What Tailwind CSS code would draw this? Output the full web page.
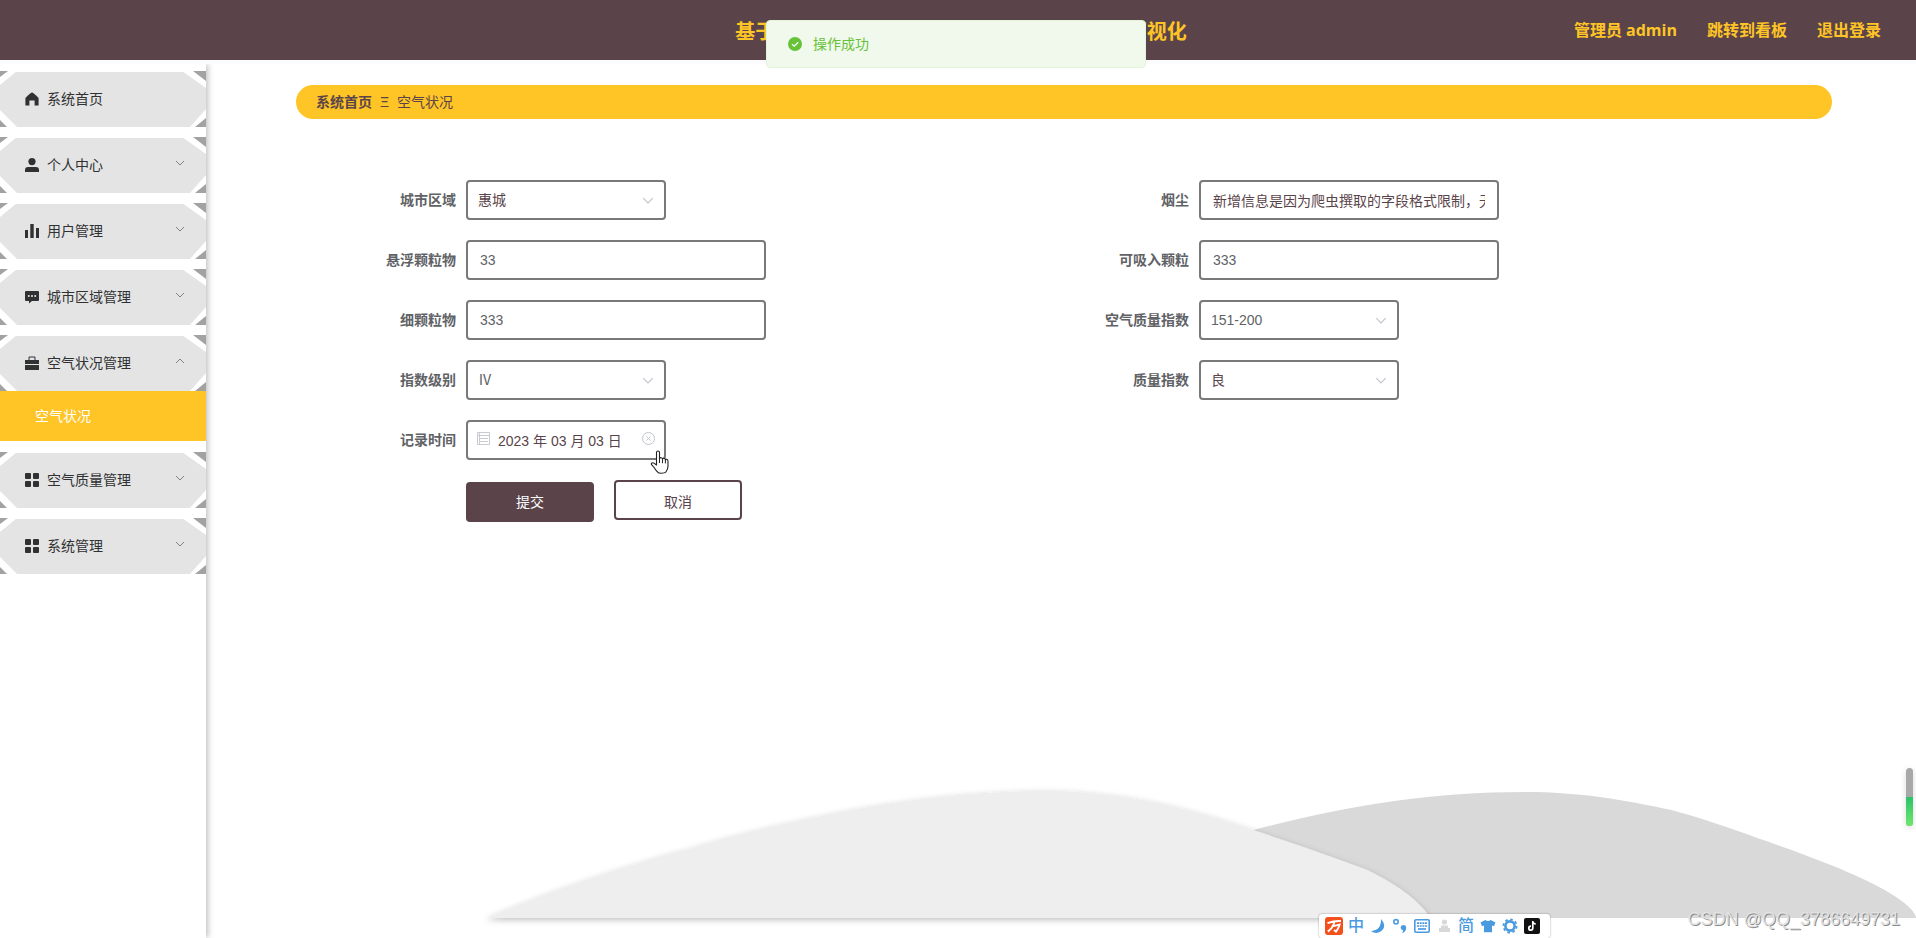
<!DOCTYPE html>
<html lang="zh-CN">
<head>
<meta charset="utf-8">
<meta name="viewport" content="width=device-width, initial-scale=1">
<title>空气状况</title>
<script src="https://cdn.jsdelivr.net/npm/@tailwindcss/browser@4"></script>
</head>
<body class="flex min-h-screen flex-col overflow-hidden bg-white font-['Liberation_Sans','Noto_Sans_CJK_SC',sans-serif] text-sm text-[#606266]">

<!-- Shared symbols -->
<svg class="hidden" aria-hidden="true">
  <symbol id="plate" viewBox="0 0 206 56" preserveAspectRatio="none">
    <path d="M0 1H206V56H0Z" fill="#e4e4e4"/>
    <g fill="#fff">
      <path d="M0 0H17L0 14Z"/><path d="M182 0H206V17Z"/><path d="M206 38V56H190Z"/><path d="M0 39V56H17Z"/>
    </g>
    <g fill="#a2a2a2">
      <path d="M0 0H8L0 6Z"/><path d="M193 0H206V10Z"/><path d="M206 47V56H195Z"/><path d="M0 49V56H7Z"/>
    </g>
  </symbol>
  <symbol id="down" viewBox="0 0 10 6"><path d="M1 1L5 5L9 1" fill="none" stroke="currentColor"/></symbol>
  <symbol id="up" viewBox="0 0 10 6"><path d="M1 5L5 1L9 5" fill="none" stroke="currentColor"/></symbol>
  <symbol id="grid" viewBox="0 0 14 14"><g fill="currentColor"><rect width="6" height="6" rx="1"/><rect x="8" width="6" height="6" rx="1"/><rect y="8" width="6" height="6" rx="1"/><rect x="8" y="8" width="6" height="6" rx="1"/></g></symbol>
</svg>

<header class="relative z-10 grid h-16 shrink-0 grid-cols-[1fr_auto_1fr] items-center border-b-4 border-[#fbfafd] bg-[#5a444a] pr-[35px] pl-[41px] font-['Open_Sans','Noto_Sans_CJK_SC',sans-serif] font-bold text-[#ffc425]">
  <h1 class="col-start-2 pt-[3px] text-xl whitespace-nowrap">基于Python的惠州市空气质量数据采集分析可视化</h1>
  <nav class="flex items-center justify-end gap-[30px] text-base whitespace-nowrap">
    <span>管理员 admin</span>
    <a href="#">跳转到看板</a>
    <a href="#">退出登录</a>
  </nav>
  <!-- Toast -->
  <div role="status" class="absolute top-5 left-1/2 z-10 flex h-12 w-[380px] -translate-x-[192px] items-center gap-[11px] rounded border border-[#e1f3d8] bg-[#f0f9eb] px-[21px] text-sm font-normal text-[#67c23a]">
    <svg class="size-[14px]" viewBox="0 0 14 14"><circle cx="7" cy="7" r="7" fill="#67c23a"/><path d="M4 7.2L6.2 9.2L10.2 5.2" fill="none" stroke="#fff" stroke-width="1.3"/></svg>
    <p>操作成功</p>
  </div>
</header>

<div class="flex flex-1">
  <aside class="relative w-[206px] shrink-0 pt-[7px] text-[#303133] shadow-[2px_0_6px_rgba(0,0,0,0.25)]">
    <nav class="flex flex-col gap-[10px]">
      <a href="#" class="relative flex h-14 items-center pr-[22px] pl-[25px]">
        <svg class="absolute inset-0 h-full w-full"><use href="#plate"/></svg>
        <svg class="relative mr-2 size-[14px]" viewBox="0 0 14 14"><path d="M7 0.5Q8 0.5 13.2 5.6Q13.6 6 13.6 6.6V13.4H9.6V8.6H4.4V13.4H0.4V6.6Q0.4 6 0.8 5.6Q6 0.5 7 0.5Z" fill="currentColor"/></svg>
        <span class="relative flex-1">系统首页</span>
      </a>
      <button type="button" class="relative flex h-14 items-center pr-[21px] pl-[25px] text-left">
        <svg class="absolute inset-0 h-full w-full"><use href="#plate"/></svg>
        <svg class="relative mr-2 size-[14px]" viewBox="0 0 14 14"><circle cx="7" cy="3.6" r="3.6" fill="currentColor"/><path d="M0 14V12Q0 9 3 9H11Q14 9 14 12V14Z" fill="currentColor"/></svg>
        <span class="relative flex-1">个人中心</span>
        <svg class="relative mb-1 h-[6px] w-[10px] text-[#808285]"><use href="#down"/></svg>
      </button>
      <button type="button" class="relative flex h-14 items-center pr-[21px] pl-[25px] text-left">
        <svg class="absolute inset-0 h-full w-full"><use href="#plate"/></svg>
        <svg class="relative mr-2 size-[14px]" viewBox="0 0 14 14"><path d="M0 6H3V14H0ZM5.3 0H8.7V14H5.3ZM11 4H14V14H11Z" fill="currentColor"/></svg>
        <span class="relative flex-1">用户管理</span>
        <svg class="relative mb-1 h-[6px] w-[10px] text-[#808285]"><use href="#down"/></svg>
      </button>
      <button type="button" class="relative flex h-14 items-center pr-[21px] pl-[25px] text-left">
        <svg class="absolute inset-0 h-full w-full"><use href="#plate"/></svg>
        <svg class="relative mr-2 size-[14px]" viewBox="0 0 14 14"><path d="M1 1H13Q14 1 14 2V10Q14 11 13 11H7L4 13.6V11H1Q0 11 0 10V2Q0 1 1 1Z" fill="currentColor"/><g fill="#e4e4e4"><circle cx="3.8" cy="6" r="1"/><circle cx="7" cy="6" r="1"/><circle cx="10.2" cy="6" r="1"/></g></svg>
        <span class="relative flex-1">城市区域管理</span>
        <svg class="relative mb-1 h-[6px] w-[10px] text-[#808285]"><use href="#down"/></svg>
      </button>
      <div class="pb-px">
        <button type="button" aria-expanded="true" class="relative flex h-14 w-full items-center pr-[21px] pl-[25px] text-left">
          <svg class="absolute inset-0 h-full w-full"><use href="#plate"/></svg>
          <svg class="relative mr-2 size-[14px]" viewBox="0 0 14 14"><path d="M4 4V1H10V4" fill="none" stroke="currentColor"/><path d="M0 4H14V8H0ZM0 9H14V14H0Z" fill="currentColor"/></svg>
          <span class="relative flex-1">空气状况管理</span>
          <svg class="relative mb-1 h-[6px] w-[10px] text-[#808285]"><use href="#up"/></svg>
        </button>
        <a href="#" class="flex h-[50px] items-center bg-[#ffc425] pl-[35px] text-white">空气状况</a>
      </div>
      <button type="button" class="relative flex h-14 items-center pr-[21px] pl-[25px] text-left">
        <svg class="absolute inset-0 h-full w-full"><use href="#plate"/></svg>
        <svg class="relative mr-2 size-[14px]"><use href="#grid"/></svg>
        <span class="relative flex-1">空气质量管理</span>
        <svg class="relative mb-1 h-[6px] w-[10px] text-[#808285]"><use href="#down"/></svg>
      </button>
      <button type="button" class="relative flex h-14 items-center pr-[21px] pl-[25px] text-left">
        <svg class="absolute inset-0 h-full w-full"><use href="#plate"/></svg>
        <svg class="relative mr-2 size-[14px]"><use href="#grid"/></svg>
        <span class="relative flex-1">系统管理</span>
        <svg class="relative mb-1 h-[6px] w-[10px] text-[#808285]"><use href="#down"/></svg>
      </button>
    </nav>
  </aside>

  <main class="relative flex-1 pt-[21px] pr-[84px] pl-[90px]">
    <!-- Hills backdrop -->
    <svg class="absolute right-0 bottom-0 w-[84%]" viewBox="480 779 1436 158" aria-hidden="true">
      <defs>
        <filter id="soft" x="-5%" y="-10%" width="110%" height="125%"><feDropShadow dx="0" dy="2" stdDeviation="3" flood-color="#000" flood-opacity="0.25"/></filter>
      </defs>
      <path d="M1000 917C1080 886 1170 850 1257 828C1350 804 1430 791 1524 791C1580 791 1625 799 1671 809C1705 818 1735 829 1757 837C1795 850 1845 868 1875 884C1900 897 1914 908 1916 917Z" fill="#d9d9d9"/>
      <path d="M486 917C546 892 628 863 689 848C730 835 765 827 802 819C880 802 960 790 1045 790C1120 790 1190 807 1253 829C1290 841 1330 855 1365 868C1395 882 1420 900 1430 917Z" fill="#eee" filter="url(#soft)"/>
    </svg>

    <div class="relative">
      <nav aria-label="breadcrumb" class="flex h-[34px] items-center gap-2 rounded-full bg-[#ffc425] px-5 text-[#5a444a]">
        <a href="#" class="font-bold">系统首页</a><span>Ξ</span><span>空气状况</span>
      </nav>

      <form class="mx-[35px] mt-[61px] grid grid-cols-2 gap-y-5 text-[#606266]" onsubmit="return false">
        <div class="flex items-center gap-[10px]">
          <label for="area" class="w-[125px] text-right font-bold">城市区域</label>
          <div class="relative w-[200px]">
            <select id="area" class="h-10 w-full appearance-none rounded border-2 border-[#797979] bg-white pl-[10px] text-[#5a444a]"><option>惠城</option></select>
            <svg class="pointer-events-none absolute top-[17px] right-3 h-[7px] w-3 text-[#c0c4cc]"><use href="#down"/></svg>
          </div>
        </div>
        <div class="flex items-center gap-[10px]">
          <label for="smoke" class="w-[125px] text-right font-bold">烟尘</label>
          <input id="smoke" type="text" value="新增信息是因为爬虫撰取的字段格式限制，无法获取" class="h-10 w-[300px] rounded border-2 border-[#797979] bg-white px-3 text-[#5a444a]">
        </div>
        <div class="flex items-center gap-[10px]">
          <label for="tsp" class="w-[125px] text-right font-bold">悬浮颗粒物</label>
          <input id="tsp" type="text" value="33" class="h-10 w-[300px] rounded border-2 border-[#797979] bg-white px-3">
        </div>
        <div class="flex items-center gap-[10px]">
          <label for="pm10" class="w-[125px] text-right font-bold">可吸入颗粒</label>
          <input id="pm10" type="text" value="333" class="h-10 w-[300px] rounded border-2 border-[#797979] bg-white px-3">
        </div>
        <div class="flex items-center gap-[10px]">
          <label for="pm25" class="w-[125px] text-right font-bold">细颗粒物</label>
          <input id="pm25" type="text" value="333" class="h-10 w-[300px] rounded border-2 border-[#797979] bg-white px-3">
        </div>
        <div class="flex items-center gap-[10px]">
          <label for="aqi" class="w-[125px] text-right font-bold">空气质量指数</label>
          <div class="relative w-[200px]">
            <select id="aqi" class="h-10 w-full appearance-none rounded border-2 border-[#797979] bg-white pl-[10px]"><option>151-200</option></select>
            <svg class="pointer-events-none absolute top-[17px] right-3 h-[7px] w-3 text-[#c0c4cc]"><use href="#down"/></svg>
          </div>
        </div>
        <div class="flex items-center gap-[10px]">
          <label for="level" class="w-[125px] text-right font-bold">指数级别</label>
          <div class="relative w-[200px]">
            <select id="level" class="h-10 w-full appearance-none rounded border-2 border-[#797979] bg-white pl-[10px]"><option>Ⅳ</option></select>
            <svg class="pointer-events-none absolute top-[17px] right-3 h-[7px] w-3 text-[#c0c4cc]"><use href="#down"/></svg>
          </div>
        </div>
        <div class="flex items-center gap-[10px]">
          <label for="quality" class="w-[125px] text-right font-bold">质量指数</label>
          <div class="relative w-[200px]">
            <select id="quality" class="h-10 w-full appearance-none rounded border-2 border-[#797979] bg-white pl-[10px] text-[#5a444a]"><option>良</option></select>
            <svg class="pointer-events-none absolute top-[17px] right-3 h-[7px] w-3 text-[#c0c4cc]"><use href="#down"/></svg>
          </div>
        </div>
        <div class="col-span-2 flex items-center gap-[10px]">
          <label for="date" class="w-[125px] text-right font-bold">记录时间</label>
          <div class="relative w-[200px]">
            <input id="date" type="text" value="2023 年 03 月 03 日" class="h-10 w-full rounded border-2 border-[#797979] bg-white pr-8 pl-[30px] text-[#5a444a]">
            <svg class="pointer-events-none absolute top-3 left-[11px] h-[13px] w-[13px]" viewBox="0 0 13 13" fill="none" stroke="#c8cbd2"><path d="M0.5 0.5H12.5V12.5H0.5ZM0.5 3.5H12.5M2.5 6.5H11M2.5 9.5H11M2.5 0V12"/></svg>
            <button type="button" aria-label="清除" class="absolute top-3 right-[11px] size-[13px]"><svg class="size-full" viewBox="0 0 13 13" fill="none" stroke="#c0c4cc"><circle cx="6.5" cy="6.5" r="6"/><path d="M4.5 4.5L8.5 8.5M8.5 4.5L4.5 8.5"/></svg></button>
            <!-- Pointer over the clear button -->
            <svg class="pointer-events-none absolute top-[30px] left-[184px] z-10 h-6 w-[19px]" viewBox="0 0 19 24" aria-hidden="true"><path d="M6.5 15V2.5Q6.5 1 8 1T9.5 2.5V9Q9.8 7.5 11.2 7.7T12.5 9.4Q13 8 14.2 8.3T15.4 10Q15.8 9 16.8 9.3T18 11V16Q18 19.5 15.8 22.2Q14.8 23.2 11.5 23.2T7.6 22Q5.5 20 4.5 18L1.6 14.6Q0.9 13.4 1.9 12.9T4.3 13.4Z" fill="#fff" stroke="#222" stroke-width="1.1" stroke-linejoin="round"/><path d="M9.5 9V13M12.5 9.4V13.2M15.4 10V13.4" stroke="#222" fill="none"/></svg>
          </div>
        </div>
        <div class="col-span-2 flex items-start gap-5 pl-[135px]">
          <button type="submit" class="mt-[2px] h-10 w-32 rounded bg-[#5a444a] text-white">提交</button>
          <button type="button" class="h-10 w-32 rounded border-2 border-[#5a444a] bg-white pt-1 text-[#5a444a]">取消</button>
        </div>
      </form>
    </div>
  </main>
</div>

<!-- Floating widgets over the page -->
<div class="absolute top-[768px] right-[3px] h-[58px] w-[7px] overflow-hidden rounded-full bg-[#a8a8a8] pt-[29px] shadow-[0_2px_6px_rgba(0,0,0,0.15)]">
  <div class="h-full bg-linear-to-b from-[#2ac26b] to-[#6ae86a]"></div>
</div>

<div class="absolute right-[366px] bottom-0 flex h-6 w-[231px] items-center gap-1 rounded-[3px] bg-white pl-[6px] shadow-[0_0_2px_rgba(0,0,0,0.4)]" aria-hidden="true">
  <svg class="size-[18px]" viewBox="0 0 18 18"><rect width="18" height="18" rx="3" fill="#f2511b"/><path d="M2.5 6.2Q9 3.6 16 4M9.5 4.8Q8 11 2.8 14.6M7.5 9.4L14.6 7.6Q13.6 11.5 11 14.6L9 13" fill="none" stroke="#fff" stroke-width="1.9"/></svg>
  <span class="w-[18px] text-center text-base leading-none font-medium text-[#4a9ae0]">中</span>
  <svg class="size-[18px]" viewBox="0 0 18 18"><path d="M12 2Q18 8.5 13 13.5Q8 18 2 14.2Q8 13.5 10.4 9.8Q12.4 6.5 12 2Z" fill="#4a9ae0"/></svg>
  <svg class="size-[18px]" viewBox="0 0 18 18"><circle cx="5" cy="4.8" r="2.2" fill="none" stroke="#4a9ae0" stroke-width="1.6"/><path d="M12.2 8Q15.2 8 15.2 11.2Q14.8 15 11 16Q12 14.6 12 13.2Q9.6 12.8 9.6 10.6Q9.8 8 12.2 8Z" fill="#4a9ae0"/></svg>
  <svg class="size-[18px]" viewBox="0 0 18 18"><rect x="1.8" y="2.8" width="14.4" height="12.4" rx="1.2" fill="none" stroke="#4a9ae0" stroke-width="1.6"/><path d="M4 6.2H14M4 9H14" stroke="#4a9ae0" stroke-width="1.7" stroke-dasharray="2 0.67"/><path d="M5 12H13" stroke="#4a9ae0" stroke-width="1.7"/></svg>
  <svg class="size-[18px]" viewBox="0 0 18 18" fill="#d8d8d8"><circle cx="9.5" cy="5" r="2.6"/><path d="M6 8.5H13V11H15V15H4V11H6Z"/></svg>
  <span class="w-[18px] text-center text-base leading-none font-medium text-[#4a9ae0]">简</span>
  <svg class="size-[18px]" viewBox="0 0 18 18"><path d="M6.2 3Q9 5.2 11.8 3L16.5 5.6L15 9.2L13 8.6V15.2H5V8.6L3 9.2L1.5 5.6Z" fill="#4a9ae0"/></svg>
  <svg class="size-[18px]" viewBox="0 0 18 18" fill="none" stroke="#4a9ae0"><circle cx="9" cy="9" r="4.6" stroke-width="2.6"/><circle cx="9" cy="9" r="6.6" stroke-width="1.8" stroke-dasharray="2.6 2.58"/></svg>
  <svg class="size-[18px]" viewBox="0 0 18 18"><rect x="1" y="1" width="16" height="16" rx="2" fill="#111"/><path d="M9.8 4V11Q9.8 13.2 7.8 13.2T5.8 11.2T8 9.2M9.8 4Q10.2 6.8 12.8 7" fill="none" stroke="#fff" stroke-width="1.7"/></svg>
</div>

<p class="absolute right-4 bottom-[7px] text-lg leading-6 text-[#e2e2e2] [text-shadow:1px_1px_0_#8a8a8a]">CSDN @QQ_3786649731</p>

</body>
</html>
